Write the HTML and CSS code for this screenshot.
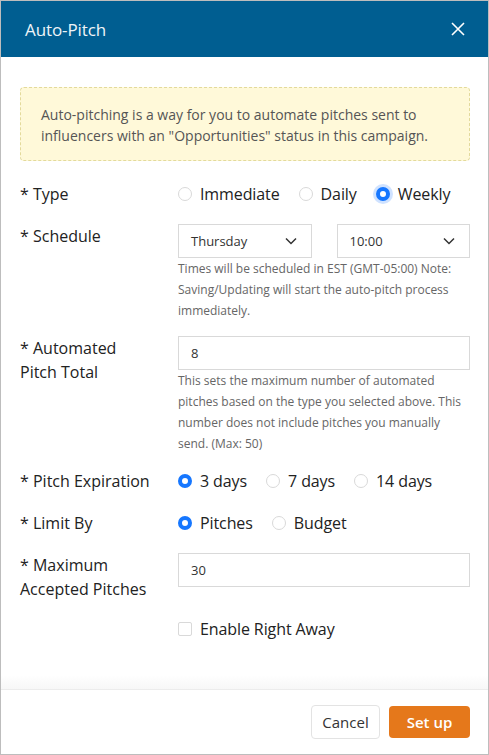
FILE: index.html
```html
<!DOCTYPE html>
<html>
<head>
<meta charset="utf-8">
<link rel="stylesheet" href="styles.css">
</head>
<body>
<div class="modal">
  <div class="header">
    <div class="title">Auto-Pitch</div>
    <svg class="close" width="14" height="14" viewBox="0 0 14 14"><path d="M1 1L13 13M13 1L1 13" stroke="#fff" stroke-width="1.6" fill="none"/></svg>
  </div>
  <div class="content">
    <div class="alert">Auto-pitching is a way for you to automate pitches sent to influencers with an "Opportunities" status in this campaign.</div>

    <div class="row row-type">
      <div class="label">* Type</div>
      <div class="field radios">
        <span class="radio"><span class="dot"></span>Immediate</span>
        <span class="radio"><span class="dot"></span>Daily</span>
        <span class="radio"><span class="dot on focus"></span>Weekly</span>
      </div>
    </div>

    <div class="row row-schedule">
      <div class="label">* Schedule</div>
      <div class="field">
        <div class="selects">
          <div class="select">Thursday<svg width="12" height="8" viewBox="0 0 12 8"><path d="M1 1.5L6 6.5L11 1.5" stroke="#333" stroke-width="1.5" fill="none"/></svg></div>
          <div class="select">10:00<svg width="12" height="8" viewBox="0 0 12 8"><path d="M1 1.5L6 6.5L11 1.5" stroke="#333" stroke-width="1.5" fill="none"/></svg></div>
        </div>
        <div class="help">Times will be scheduled in EST (GMT-05:00) Note: Saving/Updating will start the auto-pitch process immediately.</div>
      </div>
    </div>

    <div class="row row-total">
      <div class="label">* Automated<br>Pitch Total</div>
      <div class="field">
        <div class="input">8</div>
        <div class="help">This sets the maximum number of automated pitches based on the type you selected above. This number does not include pitches you manually send. (Max: 50)</div>
      </div>
    </div>

    <div class="row row-exp">
      <div class="label">* Pitch Expiration</div>
      <div class="field radios">
        <span class="radio"><span class="dot on"></span>3 days</span>
        <span class="radio"><span class="dot"></span>7 days</span>
        <span class="radio"><span class="dot"></span>14 days</span>
      </div>
    </div>

    <div class="row row-limit">
      <div class="label">* Limit By</div>
      <div class="field radios">
        <span class="radio"><span class="dot on"></span>Pitches</span>
        <span class="radio"><span class="dot"></span>Budget</span>
      </div>
    </div>

    <div class="row row-max">
      <div class="label">* Maximum<br>Accepted Pitches</div>
      <div class="field">
        <div class="input">30</div>
      </div>
    </div>

    <div class="row row-check">
      <div class="label"></div>
      <div class="field radios">
        <span class="radio"><span class="box"></span>Enable Right Away</span>
      </div>
    </div>
  </div>
  <div class="footer">
    <button class="btn cancel">Cancel</button>
    <button class="btn primary">Set up</button>
  </div>
</div>
</body>
</html>
```
FILE: styles.css
```css
* { box-sizing: border-box; }
html, body { margin: 0; padding: 0; background: #fff; }
body { font-family: "Open Sans", "Noto Sans", sans-serif; color: #222; }

.modal {
  width: 489px;
  height: 755px;
  border: 1px solid #bdbdbd;
  display: flex;
  flex-direction: column;
  background: #fff;
}

.header {
  height: 56px;
  background: #005e91;
  display: flex;
  align-items: center;
  justify-content: space-between;
  padding: 0 23px 0 24px;
  flex: none;
}
.title { color: #eef4f8; font-size: 17px; letter-spacing: -0.1px; }
.close { display: block; }

.content {
  flex: 1;
  padding: 30px 18px 0 19px;
  position: relative;
}
.content::after {
  content: "";
  position: absolute;
  left: 0; right: 0; bottom: 0;
  height: 14px;
  background: linear-gradient(to bottom, rgba(245,245,245,0), #f7f7f7);
}

.alert {
  background: #fff9d9;
  border: 1px dashed #e3da9c;
  border-radius: 4px;
  padding: 16px 20px 14px 20px;
  font-size: 14px;
  line-height: 21px;
  color: #555;
  margin-bottom: 21px;
}

.row { display: grid; grid-template-columns: 158px 1fr; }
.label { font-size: 16px; line-height: 24px; color: #222; }
.row-type { margin-bottom: 18px; }
.row-schedule { margin-bottom: 15px; }
.row-total { margin-bottom: 15px; }
.row-exp { margin-bottom: 18px; }
.row-limit { margin-bottom: 18px; }
.row-max { margin-bottom: 16px; }

.radios { display: flex; align-items: center; height: 24px; }
.radio { display: inline-flex; align-items: center; font-size: 16px; color: #222; margin-right: 19px; white-space: nowrap; letter-spacing: -0.1px; }
.dot {
  width: 14px; height: 14px; border-radius: 50%;
  border: 1px solid #d9d9d9; background: #fff;
  margin-right: 8px; flex: none;
}
.dot.on { border: 4px solid #1677ff; }
.dot.focus { box-shadow: 0 0 0 3px #cfe2ff; }
.box {
  width: 14px; height: 14px; border-radius: 2px;
  border: 1px solid #d9d9d9; background: #fff;
  margin-right: 8px; flex: none;
}

.selects { display: grid; grid-template-columns: 1fr 1fr; column-gap: 25px; }
.select, .input {
  height: 34px;
  border: 1px solid #d9d9d9;
  display: flex;
  align-items: center;
  justify-content: space-between;
  padding: 0 14px 0 12px;
  font-size: 13px;
  color: #333;
}
.select svg { display: block; }

.help { font-size: 12px; line-height: 21px; color: #666; }

.footer {
  height: 65px;
  flex: none;
  border-top: 1px solid #ececec;
  display: flex;
  justify-content: flex-end;
  align-items: center;
  padding: 0 18px 0 0;
  gap: 9px;
}
.btn {
  font-family: "Open Sans", "Noto Sans", sans-serif;
  font-size: 15px;
  height: 34px;
  border-radius: 4px;
  cursor: pointer;
}
.cancel { width: 69px; background: #fff; border: 1px solid #e3e3e3; color: #333; }
.primary { width: 81px; height: 32px; background: #e5781b; border: none; color: #fff; font-weight: 600; }
```
